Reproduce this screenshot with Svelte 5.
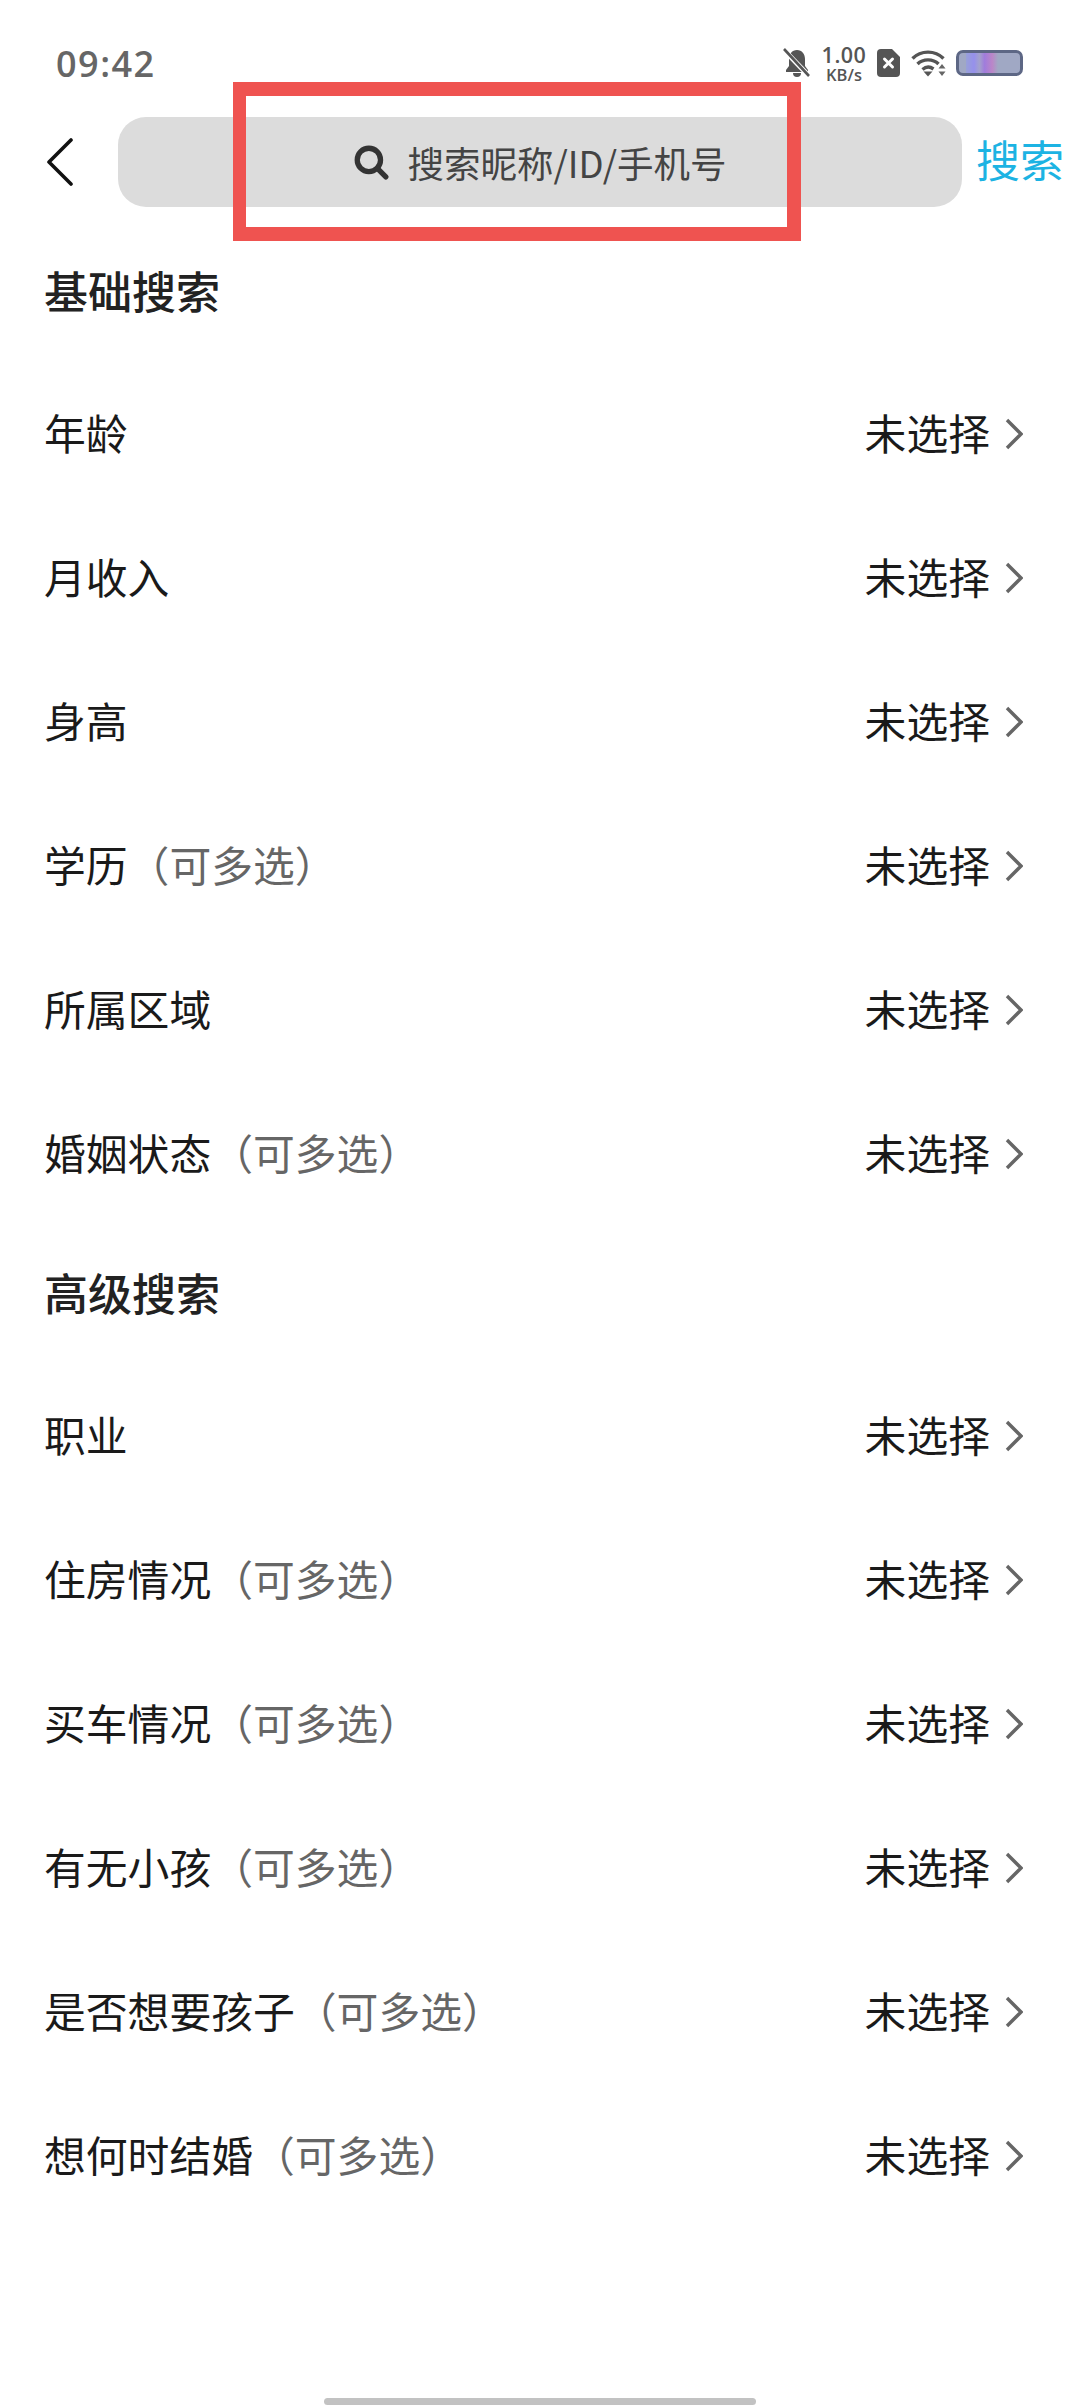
<script>
  const basic = [
    { label: "年龄" },
    { label: "月收入" },
    { label: "身高" },
    { label: "学历", multi: true },
    { label: "所属区域" },
    { label: "婚姻状态", multi: true }
  ];
  const advanced = [
    { label: "职业" },
    { label: "住房情况", multi: true },
    { label: "买车情况", multi: true },
    { label: "有无小孩", multi: true },
    { label: "是否想要孩子", multi: true },
    { label: "想何时结婚", multi: true }
  ];
  const sections = [
    { title: "基础搜索", rows: basic },
    { title: "高级搜索", rows: advanced }
  ];
</script>

<div class="page">
  <div class="status">
    <span class="time">09:42</span>
    <div class="status-icons">
      <svg class="bell" width="28" height="30" viewBox="0 0 28 30">
        <path d="M14 2c-5 0-8 4-8 9v7l-3 4v2h22v-2l-3-4v-7c0-5-3-9-8-9z" fill="#555" />
        <path d="M10 25a4 4 0 0 0 8 0z" fill="#555" />
        <path d="M1 2l26 27" stroke="#fff" stroke-width="5" />
        <path d="M1 1l25 27" stroke="#555" stroke-width="2.6" />
      </svg>
      <div class="speed">
        <span class="speed-num">1.00</span>
        <span class="speed-unit">KB/s</span>
      </div>
      <svg class="sim" width="23" height="28" viewBox="0 0 23 28">
        <path d="M4 0h11l8 8v16a4 4 0 0 1-4 4H4a4 4 0 0 1-4-4V4a4 4 0 0 1 4-4z" fill="#555" />
        <path d="M7.5 10l8 8M15.5 10l-8 8" stroke="#fff" stroke-width="3" stroke-linecap="round" />
      </svg>
      <svg class="wifi" width="35" height="28" viewBox="0 0 35 28">
        <path d="M1.5 9.5C10 1 24 1 32.500 9.500" fill="none" stroke="#555" stroke-width="3.400" />
        <path d="M6.500 15C12 9.500 22 9.500 27.500 15" fill="none" stroke="#555" stroke-width="3.400" />
        <path d="M11.500 20.500C15 17.500 19 17.500 22.500 20" fill="none" stroke="#555" stroke-width="3.400" />
        <path d="M12.500 22.500h9l-4.500 5z" fill="#555" />
        <path d="M31 15l3.500 4.500h-7zM31 27l-3.500-4.500h7z" fill="#666" />
      </svg>
      <div class="battery"><span class="battery-glow"></span></div>
    </div>
  </div>

  <div class="search-bar">
    <svg class="back" width="26" height="48" viewBox="0 0 26 48">
      <path d="M24 2L2 24l22 22" fill="none" stroke="#111" stroke-width="3.600" stroke-linecap="round" stroke-linejoin="round" />
    </svg>
    <div class="search-box">
      <svg width="36" height="36" viewBox="0 0 34 34">
        <circle cx="15" cy="15" r="11" fill="none" stroke="#333" stroke-width="5" />
        <path d="M23 23l8 8" stroke="#333" stroke-width="5" stroke-linecap="round" />
      </svg>
      <span class="placeholder">搜索昵称/ID/手机号</span>
    </div>
    <span class="search-btn">搜索</span>
  </div>

  {#each sections as section}
    <h2 class="heading">{section.title}</h2>
    {#each section.rows as row}
      <div class="row">
        <span class="label">{row.label}{#if row.multi}<span class="hint">（可多选）</span>{/if}</span>
        <span class="value">未选择</span>
        <svg class="arrow" width="18" height="32" viewBox="0 0 18 32">
          <path d="M2 2l14 14L2 30" fill="none" stroke="#666" stroke-width="3.400" />
        </svg>
      </div>
    {/each}
  {/each}

  <div class="home-bar"></div>

  <div class="mark"></div>
</div>

<style>
  :global(body) {
    margin: 0;
    background: #fff;
  }

  .page {
    position: relative;
    display: flex;
    flex-direction: column;
    min-height: 2408px;
    box-sizing: border-box;
    background: #fff;
    font-family: "Noto Sans CJK SC", "Noto Sans", sans-serif;
    color: #1a1a1a;
  }

  .status {
    display: flex;
    align-items: center;
    justify-content: space-between;
    height: 117px;
    padding: 9px 57px 0 56px;
    box-sizing: border-box;
  }

  .time {
    font-family: "Open Sans", sans-serif;
    font-size: 36px;
    font-weight: 600;
    letter-spacing: 1.500px;
    color: #666;
  }

  .status-icons {
    display: flex;
    align-items: center;
  }

  .bell {
    margin-right: 9px;
  }

  .speed {
    display: flex;
    flex-direction: column;
    align-items: center;
    width: 48px;
    margin-right: 9px;
    font-family: "Open Sans", sans-serif;
    color: #555;
  }

  .speed-num {
    font-size: 21.500px;
    font-weight: 600;
    line-height: 22px;
    letter-spacing: 0.500px;
  }

  .speed-unit {
    font-size: 16.500px;
    font-weight: 600;
    line-height: 17px;
  }

  .sim {
    margin-right: 11px;
  }

  .wifi {
    margin-right: 10px;
  }

  .battery {
    width: 67px;
    height: 26px;
    box-sizing: border-box;
    border: 3px solid #5d6785;
    border-radius: 7px;
    background: #a0a8c4;
    overflow: hidden;
  }

  .battery-glow {
    display: block;
    width: 32px;
    height: 100%;
    margin-left: 7px;
    background: linear-gradient(90deg, #98a0d8, #9690ec 25%, #a3a2cc 42%, #a07cdc 58%, #bb86c8 82%, #a0a8c4);
  }

  .search-bar {
    display: flex;
    align-items: center;
    height: 90px;
    padding-left: 47px;
    margin-bottom: 18px;
  }

  .back {
    flex: none;
    margin-right: 45px;
  }

  .search-box {
    display: flex;
    align-items: center;
    justify-content: center;
    gap: 18px;
    width: 844px;
    height: 90px;
    box-sizing: border-box;
    border-radius: 28px;
    background: #dcdcdc;
  }

  .placeholder {
    font-size: 36.500px;
    color: #444;
  }

  .search-btn {
    margin-left: 14px;
    padding-bottom: 6px;
    font-size: 44px;
    line-height: 1;
    color: #1cb3e3;
  }

  .heading {
    display: flex;
    align-items: center;
    height: 138px;
    margin: 0;
    padding: 0 0 8px 44px;
    box-sizing: border-box;
    font-size: 44px;
    font-weight: 500;
    color: #222;
  }

  .row {
    display: flex;
    align-items: center;
    height: 144px;
    padding: 0 57px 0 44px;
    box-sizing: border-box;
    font-size: 41.800px;
  }

  .label,
  .value {
    padding-bottom: 6px;
  }

  .label {
    flex: 1;
  }

  .hint {
    color: #666;
  }

  .value {
    margin-right: 15px;
  }

  .arrow {
    margin-bottom: 2px;
  }

  .home-bar {
    width: 432px;
    height: 7px;
    margin: auto auto 3px;
    border-radius: 4px;
    background: #c2c2c2;
  }

  .mark {
    position: absolute;
    top: 82px;
    left: 233px;
    width: 568px;
    height: 159px;
    box-sizing: border-box;
    border: 14px solid #ef5350;
    border-left-width: 13px;
    background: linear-gradient(#fff 21px, transparent 21px, transparent 111px, #fff 111px);
  }
</style>
